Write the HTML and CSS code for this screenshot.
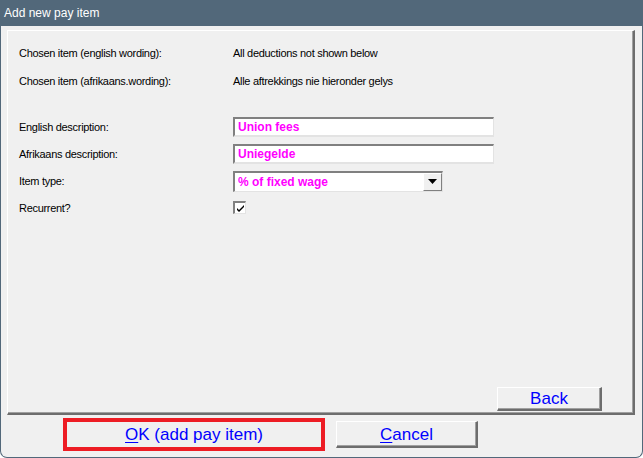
FILE: index.html
```html
<!DOCTYPE html>
<html lang="en">
<head>
<meta charset="utf-8">
<title>Add new pay item</title>
<link rel="stylesheet" href="styles.css">
</head>
<body>
<div class="window">
  <div class="titlebar">Add new pay item</div>
  <div class="client">
    <div class="panel">
      <div class="row row-first">
        <span class="label">Chosen item (english wording):</span>
        <span class="value">All deductions not shown below</span>
      </div>
      <div class="row row-second">
        <span class="label">Chosen item (afrikaans.wording):</span>
        <span class="value">Alle aftrekkings nie hieronder gelys</span>
      </div>
      <div class="row row-field row-gap">
        <span class="label">English description:</span>
        <div class="textbox">Union fees</div>
      </div>
      <div class="row row-field">
        <span class="label">Afrikaans description:</span>
        <div class="textbox">Uniegelde</div>
      </div>
      <div class="row row-field">
        <span class="label">Item type:</span>
        <div class="combo">
          <span class="combo-text">% of fixed wage</span>
          <span class="combo-btn"><svg width="9" height="5" viewBox="0 0 9 5"><path d="M0 0h9L4.5 5z" fill="#000"/></svg></span>
        </div>
      </div>
      <div class="row row-check">
        <span class="label">Recurrent?</span>
        <span class="checkbox"><svg width="9" height="9" viewBox="0 0 9 9"><path d="M1 4l2 2 5-5v2L3 8 1 6z" fill="#000"/></svg></span>
      </div>
      <div class="back-row">
        <button class="btn btn-back">Back</button>
      </div>
    </div>
    <div class="actions">
      <button class="btn btn-ok"><u>O</u>K (add pay item)</button>
      <button class="btn btn-cancel"><u>C</u>ancel</button>
    </div>
  </div>
</div>
</body>
</html>
```

FILE: styles.css
```css
html, body {
  margin: 0;
  padding: 0;
  background: #ffffff;
}

.window {
  width: 643px;
  height: 458px;
  box-sizing: border-box;
  display: flex;
  flex-direction: column;
  background: #f0f0f0;
  border: 1px solid #52687a;
  border-top: none;
  border-radius: 0 0 7px 7px;
  overflow: hidden;
  font-family: "Liberation Sans", Arial, sans-serif;
}

.titlebar {
  height: 26px;
  flex: none;
  background: #52687a;
  color: #ffffff;
  font-size: 12px;
  line-height: 26px;
  padding-left: 4px;
  margin: 0 -1px;
}

.client {
  flex: 1;
  display: flex;
  flex-direction: column;
  padding: 4px 7px 0 6px;
}

.panel {
  height: 385px;
  box-sizing: border-box;
  display: flex;
  flex-direction: column;
  border-top: 1px solid #ffffff;
  border-left: 1px solid #ffffff;
  border-right: 2px solid;
  border-bottom: 2px solid;
  border-right-color: #6d6d6d;
  border-bottom-color: #6d6d6d;
  box-shadow: inset -1px -1px 0 #a0a0a0;
  padding: 12px 0 2px 11px;
}

.row {
  display: flex;
  align-items: center;
  height: 20px;
  font-size: 11px;
  letter-spacing: -0.3px;
  color: #000000;
}

.label {
  width: 214px;
  flex: none;
}

.row-second { margin-top: 8px; }
.row-field { margin-top: 7px; height: 20px; }
.row-gap { margin-top: 26px; }
.row-check { margin-top: 10px; height: 13px; }

.textbox {
  width: 261px;
  height: 20px;
  box-sizing: border-box;
  background: #ffffff;
  border-top: 2px solid #808080;
  border-left: 2px solid #808080;
  border-right: 1px solid #e3e3e3;
  border-bottom: 2px solid #e3e3e3;
  padding-left: 3px;
  font-size: 12px;
  font-weight: bold;
  letter-spacing: 0;
  color: #ff00ff;
  line-height: 16px;
}

.combo {
  width: 210px;
  height: 21px;
  box-sizing: border-box;
  display: flex;
  background: #ffffff;
  border-top: 2px solid #808080;
  border-left: 2px solid #808080;
  border-right: 1px solid #e3e3e3;
  border-bottom: 1px solid #e3e3e3;
}

.combo-text {
  flex: 1;
  padding-left: 3px;
  font-size: 12px;
  font-weight: bold;
  letter-spacing: 0;
  color: #ff00ff;
  line-height: 18px;
}

.combo-btn {
  width: 19px;
  box-sizing: border-box;
  display: flex;
  align-items: center;
  justify-content: center;
  background: #f0f0f0;
  border-top: 1px solid #ffffff;
  border-left: 1px solid #ffffff;
  border-right: 1px solid #808080;
  border-bottom: 1px solid #808080;
}

.checkbox {
  width: 13px;
  height: 13px;
  box-sizing: border-box;
  display: flex;
  align-items: center;
  justify-content: center;
  background: #ffffff;
  border-top: 2px solid #808080;
  border-left: 2px solid #808080;
  border-right: 1px solid #e3e3e3;
  border-bottom: 1px solid #e3e3e3;
}

.back-row {
  margin-top: auto;
  display: flex;
  justify-content: flex-end;
  padding-right: 31px;
}

.btn {
  font-family: "Liberation Sans", Arial, sans-serif;
  font-size: 17px;
  color: #0000ff;
  background: #f0f0f0;
  box-sizing: border-box;
  padding: 0;
  margin: 0;
  border-top: 1px solid #ffffff;
  border-left: 1px solid #ffffff;
  border-right: 2px solid #6d6d6d;
  border-bottom: 2px solid #6d6d6d;
  box-shadow: inset -1px -1px 0 #a0a0a0;
  line-height: 1;
}

.btn u {
  text-decoration-thickness: 1px;
  text-underline-offset: 2px;
}

.btn-back {
  width: 105px;
  height: 24px;
}

.actions {
  display: flex;
  align-items: center;
  height: 39px;
  padding-left: 56px;
  gap: 11px;
}

.btn-ok {
  width: 262px;
  height: 33px;
  outline: 4px solid #ed1c24;
  outline-offset: -4px;
  border: none;
  box-shadow: inset 5px 5px 0 -4px #ffffff, inset -6px -6px 0 -4px #6d6d6d;
}

.btn-cancel {
  width: 142px;
  height: 27px;
}
```
